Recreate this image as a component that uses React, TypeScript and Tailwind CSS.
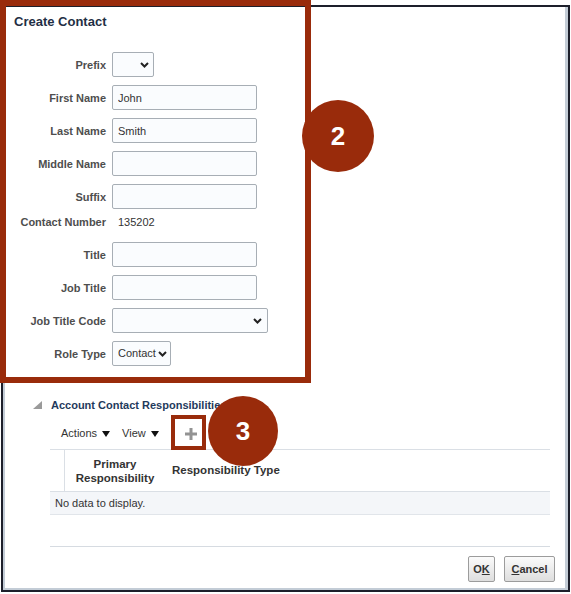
import React from "react";

const labelCls = "text-right text-[11px] font-bold text-[#4e4e4e] leading-[14px]";
const inputCls =
  "h-[25px] rounded-[2px] border border-[#a7aeb5] bg-[#fafcfe] px-[5px] text-[11px] text-[#333] outline-none";

function Chevron() {
  return (
    <svg width="9" height="6" viewBox="0 0 9 6" className="shrink-0">
      <polyline points="1,1 4.5,4.5 8,1" fill="none" stroke="#222" strokeWidth="2" />
    </svg>
  );
}

function DownTri() {
  return (
    <svg width="8" height="6" viewBox="0 0 8 6">
      <polygon points="0,0 8,0 4,6" fill="#111" />
    </svg>
  );
}

function Field({ label, children }: { label: string; children: React.ReactNode }) {
  return (
    <>
      <div className={labelCls}>{label}</div>
      <div className="flex items-center">{children}</div>
    </>
  );
}

function Badge({ n, className }: { n: string; className: string }) {
  return (
    <div
      className={
        "absolute flex items-center justify-center rounded-full bg-[#992b0b] text-[26px] font-bold text-white " +
        className
      }
    >
      {n}
    </div>
  );
}

export default function App() {
  return (
    <div className="relative h-[594px] w-[571px] overflow-hidden bg-white pl-[1px] pt-[5px] font-['Liberation_Sans',Arial,sans-serif]">
      <div className="h-[587px] w-[569px] border-2 border-[#1d1f2b]">
        <div className="flex h-full flex-col border-b-2 border-l-2 border-r-[3px] border-[#c3ccd6]">
          <h1 className="pl-[9px] pt-[7px] text-[13px] font-bold leading-[16px] text-[#1f2f45]">
            Create Contact
          </h1>

          <div className="mt-[22px] grid grid-cols-[101px_auto] items-center gap-x-[6px] gap-y-[8px]">
            <Field label="Prefix">
              <div className={inputCls + " flex w-[42px] items-center justify-end pr-[4px]"}>
                <Chevron />
              </div>
            </Field>
            <Field label="First Name">
              <input readOnly value="John" className={inputCls + " w-[145px]"} />
            </Field>
            <Field label="Last Name">
              <input readOnly value="Smith" className={inputCls + " w-[145px]"} />
            </Field>
            <Field label="Middle Name">
              <input readOnly value="" className={inputCls + " w-[145px]"} />
            </Field>
            <Field label="Suffix">
              <input readOnly value="" className={inputCls + " w-[145px]"} />
            </Field>
            <div className={labelCls + " h-[17px] self-start !leading-[10px]"}>Contact Number</div>
            <div className="h-[17px] self-start pl-[6px] text-[11px] leading-[10px] text-[#333]">135202</div>
            <Field label="Title">
              <input readOnly value="" className={inputCls + " w-[145px]"} />
            </Field>
            <Field label="Job Title">
              <input readOnly value="" className={inputCls + " w-[145px]"} />
            </Field>
            <Field label="Job Title Code">
              <div className={inputCls + " flex w-[156px] items-center justify-end pr-[5px]"}>
                <Chevron />
              </div>
            </Field>
            <Field label="Role Type">
              <div className={inputCls + " flex w-[59px] items-center gap-[1px] pl-[5px] pr-[3px]"}>
                <span className="w-[41px] overflow-hidden whitespace-nowrap">Contact</span>
                <Chevron />
              </div>
            </Field>
          </div>

          <div className="mt-[31px] flex h-[16px] items-center gap-[9px] pl-[28px]">
            <svg width="9" height="8" viewBox="0 0 9 8">
              <polygon points="9,0 9,8 0,8" fill="#9a9a9a" />
            </svg>
            <span className="text-[11px] font-bold text-[#1f3a5c]">
              Account Contact Responsibilities
            </span>
          </div>

          <div className="mt-[5px] flex h-[31px] items-center pl-[56px] text-[11px] text-[#333]">
            <span>Actions</span>
            <span className="ml-[5px]">
              <DownTri />
            </span>
            <span className="ml-[12px]">View</span>
            <span className="ml-[5px]">
              <DownTri />
            </span>
            <svg width="14" height="12" viewBox="0 0 14 12" className="ml-[25px]">
              <rect x="5.5" y="0" width="3" height="12" fill="#939393" />
              <rect x="1" y="4.5" width="12" height="3" fill="#939393" />
            </svg>
          </div>

          <div className="ml-[45px] w-[500px] text-[#333]">
            <div className="flex h-[43px] border-y border-[#dadfe5]">
              <div className="w-[15px] border-r border-[#dadfe5]" />
              <div className="flex w-[100px] items-center justify-center text-center text-[11.5px] font-bold leading-[14px]">
                Primary
                <br />
                Responsibility
              </div>
              <div className="flex items-center pl-[7px] text-[11.5px] font-bold">Responsibility Type</div>
            </div>
            <div className="flex h-[23px] items-center border-b border-[#e1e5ea] bg-[#f4f6f9] pl-[5px] text-[11px]">
              No data to display.
            </div>
            <div className="h-[32px] border-b border-[#d6dbe1]" />
          </div>

          <div className="mt-[9px] flex justify-end gap-[9px] pr-[10px]">
            <button className="h-[26px] w-[27px] rounded-[2px] border border-[#9c9c9c] bg-gradient-to-b from-[#fbfbfb] to-[#dedede] text-[11px] font-bold text-[#333]">
              O<span className="underline">K</span>
            </button>
            <button className="h-[26px] w-[51px] rounded-[2px] border border-[#9c9c9c] bg-gradient-to-b from-[#fbfbfb] to-[#dedede] text-[11px] font-bold text-[#333]">
              <span className="underline">C</span>ancel
            </button>
          </div>
        </div>
      </div>

      <div className="absolute left-0 top-0 h-[383px] w-[311px] border-[6px] border-[#992b0b]" />
      <Badge n="2" className="left-[302px] top-[100px] h-[72px] w-[72px]" />
      <div className="absolute left-[171px] top-[415px] h-[35px] w-[35px] border-[4px] border-[#992b0b]" />
      <Badge n="3" className="left-[208px] top-[396px] h-[70px] w-[70px]" />
    </div>
  );
}
